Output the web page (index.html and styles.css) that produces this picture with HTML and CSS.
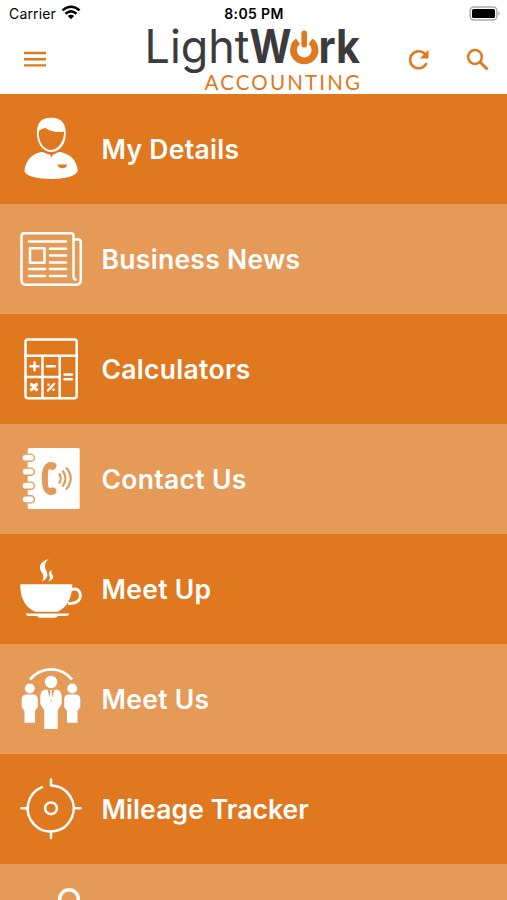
FILE: index.html
```html
<!DOCTYPE html>
<html lang="en">
<head>
<meta charset="utf-8">
<title>LightWork Accounting</title>
<link rel="stylesheet" href="styles.css">
</head>
<body>
<div class="app">
  <header class="top">
    <div class="status">
      <div class="carrier"><span>Carrier</span>
        <svg width="20" height="15" viewBox="0 0 20 15"><g fill="none" stroke="#000" stroke-width="2.5"><path d="M1.4 5.4Q10 -2 18.6 5.4"/><path d="M4.5 8.8Q10 4 15.5 8.8"/></g><path d="M6.8 11Q10 8.4 13.2 11L10 14.3Z"/></svg>
      </div>
      <div class="time">8:05 PM</div>
      <svg class="battery" width="32" height="16" viewBox="0 0 32 16"><rect x="1.2" y="1" width="26.6" height="13" rx="3.5" fill="#fff" stroke="#aaa" stroke-width="1.4"/><rect x="3" y="3" width="23" height="9" rx="1.5"/><path d="M29.3 5.2Q32.3 7.5 29.3 9.8Z" fill="#aaa"/></svg>
    </div>
    <nav class="bar">
      <svg class="menu" width="24" height="18" viewBox="0 0 24 18"><path d="M1 3H23M1 9.2H23M1 15.4H23" stroke="#e07820" stroke-width="2.4"/></svg>
      <svg class="logo" width="220" height="68" viewBox="144 26 220 68">
        <g fill="#3b3b3d">
          <text class="light" x="144.5" y="63" textLength="105" lengthAdjust="spacingAndGlyphs">Light</text>
          <text class="work" x="249.5" y="63" textLength="42" lengthAdjust="spacingAndGlyphs">W</text>
          <text class="work" x="318.5" y="63" textLength="41.5" lengthAdjust="spacingAndGlyphs">rk</text>
        </g>
        <g fill="none" stroke="#e07820"><path d="M298 41.2A10.8 10.8 0 1 0 310.5 41.2" stroke-width="6.8"/><path d="M304.2 33.2V44.8" stroke-width="5.6" stroke-linecap="round"/></g>
        <text class="acc" x="204.5" y="89.5" textLength="155.5" lengthAdjust="spacing">ACCOUNTING</text>
      </svg>
      <svg class="refresh" width="24" height="24" viewBox="0 0 24 24"><path d="M19.5 15A8.5 8.5 0 1 1 18 6.2" fill="none" stroke="#e07820" stroke-width="2.5"/><path d="M21.5 1.8V10.5H12.8Z" fill="#e07820"/></svg>
      <svg class="search" width="24" height="24" viewBox="0 0 24 24"><g fill="none" stroke="#e07820"><circle cx="9" cy="9" r="6.9" stroke-width="2.5"/><path d="M13.8 13.8L21.5 21.5" stroke-width="3"/></g></svg>
    </nav>
  </header>
  <main class="list">
    <div class="row">
      <svg class="icon" viewBox="0 0 100 110">
        <path fill="#fff" d="M37 42C36 29 41 23.7 51 23.7S67 29 65.5 43C64.5 52 58 58 51 58S38 51 37 42Z"/>
        <path class="cut" d="M38.8 37C41 35.5 43 34 45.5 34C49 37 57 39 64 37.5C64.5 47 58 56 51 56S38 48 38.8 37Z"/>
        <path fill="#fff" d="M41 58C44.5 58 45.5 60 50 60.5L51.5 63.5L53 60.5C56.5 60 57.5 57.5 60 58C69 60 76 64 77.7 76C78 82 64 85 51 85S24 82 24.5 76C26 66 32 60 41 58Z"/>
        <path class="cut" d="M57.5 70.5H67C67 75.500 58 75.500 57.500 70.500Z"/>
      </svg><span>My Details</span>
    </div>
    <div class="row alt">
      <svg class="icon line" viewBox="0 0 100 110">
        <path d="M24 29.2H71Q73.5 29.2 73.5 31.7V72Q73.5 75.5 75.5 75.5"/>
        <path d="M24 29.2Q21.5 29.2 21.5 31.7V76Q21.5 80.7 26 80.7H76Q80.8 80.7 80.8 76V38Q80.8 35.6 78 35.6H73.5"/>
        <path d="M29 37.5H66M50 44.7H66M50 51.5H66M50 58.5H66M50 65H66M50 72H66M29 65H45M29 72H45"/><rect x="30" y="44.3" width="14.5" height="14.5"/>
      </svg><span>Business News</span>
    </div>
    <div class="row">
      <svg class="icon line" viewBox="0 0 100 110">
        <rect x="25.5" y="25.5" width="51.2" height="58.8" rx="2.5"/>
        <path d="M25 41.7H77M42.5 42V84M59.7 42V84M25 63H59.7"/>
        <path d="M30.5 52.3H38.5M34.5 48.3V56.3M47 52.3H55M64.5 60.5H72M64.5 65.3H72"/>
        <path d="M31.5 70.5L36.5 75.5M36.5 70.5L31.5 75.5" stroke-width="3.2"/><path d="M48 76.5L54 70"/><path d="M48.5 70.8H48.6M53.5 75.7H53.6"/>
      </svg><span>Calculators</span>
    </div>
    <div class="row alt">
      <svg class="icon" viewBox="0 0 100 110">
        <rect x="27.7" y="24" width="52" height="61" rx="1.5" fill="#fff"/>
        <g class="ring"><rect x="22" y="30.1" width="12.4" height="7.2" rx="3.6"/><rect x="22" y="44.1" width="12.4" height="7.2" rx="3.6"/><rect x="22" y="58.1" width="12.4" height="7.2" rx="3.6"/><rect x="22" y="71.7" width="12.4" height="7.2" rx="3.6"/></g>
        <path class="cut" d="M51 38C44 38 41.7 46 41.7 54.5S44 71 51 71Q56.5 70.5 56.5 67.5Q56 63 52 63.5L49 64C47.5 61 47.5 48 49 45L52 46Q56 46 56.5 41.5Q56 38 51 38Z"/>
        <path class="wave" d="M59 49.5Q62.5 54.5 59 59.5M62.5 46.5Q68.5 54.5 62.5 62.5M66 43.5Q75.5 54.5 66 65.5"/>
      </svg><span>Contact Us</span>
    </div>
    <div class="row">
      <svg class="icon" viewBox="0 0 100 110">
        <path fill="#fff" d="M20.3 50.3H72.3C72.5 62 68 73 58 77.7H35C24 73 20 62 20.3 50.3ZM25.7 79.6H69.3Q69.3 81 67 82H58Q57 83.7 55 83.7H40Q38 83.7 37 82H28Q25.7 81 25.7 79.6Z"/>
        <path d="M71 56C76 53.5 80.3 56 80.3 61.5C80.3 67.5 74.5 70 68 69.5" fill="none" stroke="#fff" stroke-width="2.8"/>
        <path fill="#fff" d="M48.8 25C37 29 39.5 35 42.5 39.5C44 42.5 43.5 45 42 47.5C49 44 47.8 40 46 36C44 31.5 45 28.5 48.8 25ZM51.7 36C47.5 38 49 41 49.8 42.5C50.5 44.5 49.5 46 48 47.5C53.5 45.5 54 43 52.3 40.5C51 38.5 51.2 37.5 51.7 36Z"/>
      </svg><span>Meet Up</span>
    </div>
    <div class="row alt">
      <svg class="icon" viewBox="0 0 100 110">
        <path d="M30 35.5C41 22 61 22 72 35.5" fill="none" stroke="#fff" stroke-width="2.8"/>
        <g fill="#fff"><circle cx="51" cy="38" r="6.2"/><circle cx="29.8" cy="44.5" r="5"/><circle cx="72.2" cy="44.5" r="5"/>
        <path d="M45 45.7H57Q61 46 61.7 52V60L57.7 66.5V85H44.3V66.5L40.3 60V52Q41 46 45 45.7Z"/>
        <path d="M25.5 50.5H34Q37.5 51 37.8 55V63L35 67V78.7H24.5V67L21.7 63V55Q22 51 25.5 50.5Z"/>
        <path d="M68 50.5H76.5Q80 51 80.3 55V63L77.5 67V78.7H67V67L64.2 63V55Q64.5 51 68 50.5Z"/></g>
        <path class="cut" d="M47.5 45.5H54.5L51.2 58.5Z"/><path fill="#fff" d="M49.8 46H52.2L51.7 48L52.5 54L51.1 57L49.7 54L50.4 48Z"/>
      </svg><span>Meet Us</span>
    </div>
    <div class="row">
      <svg class="icon line" viewBox="0 0 100 110">
        <path d="M51 25.5V31.5A23 23 0 1 1 42 33.2M21.5 54.3H28M74 54.3H80.5M51 77.5V84"/><circle cx="51" cy="54.3" r="5.9"/>
      </svg><span class="tight">Mileage Tracker</span>
    </div>
    <div class="row alt">
      <svg class="icon line" viewBox="0 0 100 110"><circle cx="69" cy="35" r="9.3" stroke-width="3.4"/></svg>
    </div>
  </main>
</div>
</body>
</html>
```
FILE: styles.css
```css
body { margin: 0; background: #fff; font-family: Inter, "Liberation Sans", sans-serif; }
.app { width: 507px; height: 900px; overflow: hidden; }
.top { height: 94px; }
.status { height: 26px; display: grid; grid-template-columns: 1fr auto 1fr; align-items: center; padding: 0 6px 0 9px; font-size: 14px; box-sizing: border-box; }
.carrier { display: flex; align-items: center; gap: 5px; letter-spacing: 0.15px; }
.carrier svg { margin-top: -2px; }
.time { font-weight: 600; letter-spacing: 0.35px; margin-left: -2px; }
.battery { justify-self: end; margin-top: 1px; }
.bar { height: 68px; display: flex; align-items: flex-start; }
.bar svg { flex: none; }
.menu { margin: 24px 0 0 23px; }
.logo { margin-left: 97px; overflow: visible; }
.refresh { margin: 22px 0 0 43px; }
.search { margin: 22px 0 0 35px; }
.light { font: 400 46px Inter, sans-serif; }
.work { font: 700 46px Inter, sans-serif; }
.acc { font: 400 20.5px Lato, sans-serif; fill: #e07820; }
.row { height: 110px; display: flex; align-items: center; background: #e07820; color: #fff; --bg: #e07820; }
.alt { background: #e59a58; --bg: #e59a58; }
.row span { margin-left: 1.5px; font-size: 26.5px; font-weight: 600; letter-spacing: 0.3px; white-space: nowrap; }
.row .tight { letter-spacing: 0.1px; }
.icon { width: 100px; height: 110px; flex: none; }
.line { fill: none; stroke: #fff; stroke-width: 2.5; stroke-linecap: round; stroke-linejoin: round; }
.cut { fill: var(--bg); }
.ring { fill: #fff; stroke: var(--bg); stroke-width: 1.4; }
.wave { fill: none; stroke: var(--bg); stroke-width: 2.2; }
```
